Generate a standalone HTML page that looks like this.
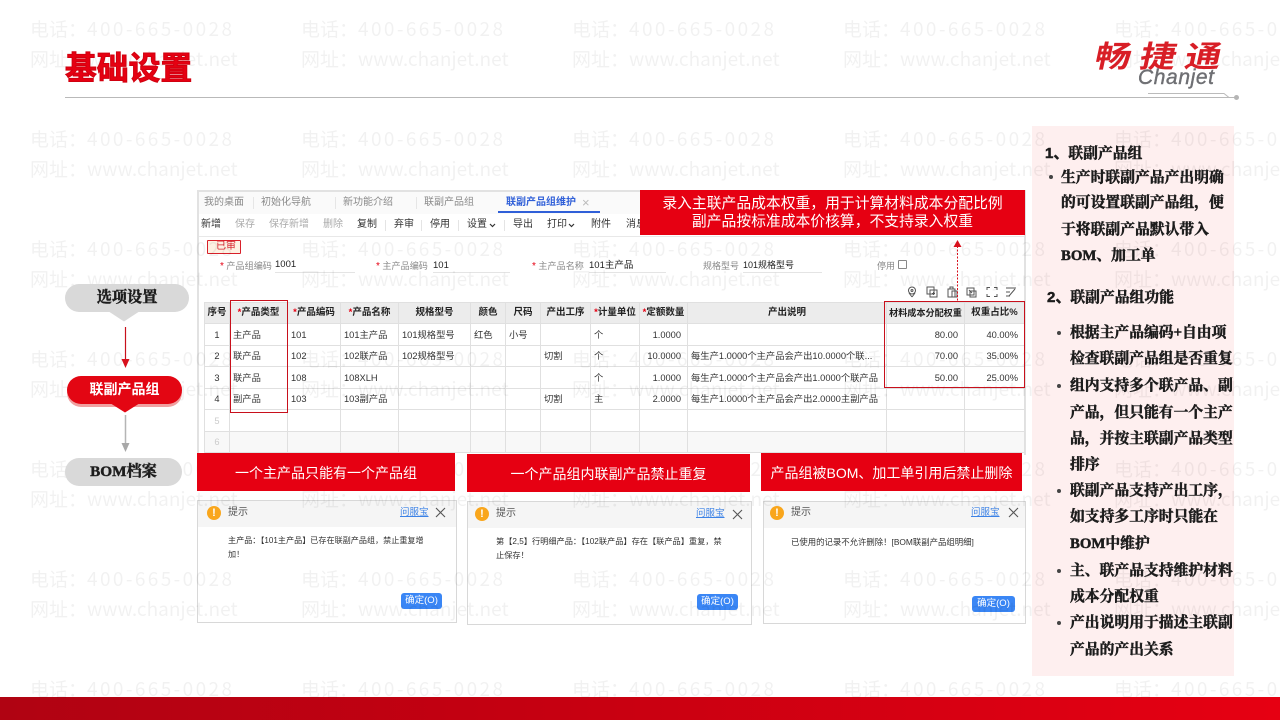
<!DOCTYPE html>
<html lang="zh"><head><meta charset="utf-8"><title>基础设置</title>
<style>
*{box-sizing:border-box}
html,body{margin:0;padding:0;background:#fff}
body{width:1280px;height:720px;position:relative;overflow:hidden;font-family:"Liberation Sans","Noto Sans CJK SC",sans-serif}
.t{position:absolute;white-space:nowrap;line-height:14px;font-size:10px;color:#333}
.b{position:absolute}
#shot{position:absolute;left:0;top:0;width:1280px;height:720px;filter:blur(.35px)}
.wm{position:absolute;left:30px;white-space:nowrap;font-family:"Noto Sans CJK SC",sans-serif;font-size:19px;line-height:24px;color:#000;opacity:.05;z-index:3;font-weight:400}
.wm span{display:inline-block;width:271px}
.wm b{font-weight:400;letter-spacing:2.4px}
.wm.u b{letter-spacing:0}
.tab{color:#8a8a8a}.tool{color:#333}.off{color:#aaa}
.sep{position:absolute;width:1px;height:11px;background:#e4e4e4;top:220px}
.lb{font-size:9.1px;color:#888}
.lb span{color:#e60012;font-size:10px}
table{position:absolute;left:204px;top:302px;border-collapse:collapse;table-layout:fixed;width:820px;font-size:9.3px;color:#333}
td,th{border:1px solid #e0e0e0;padding:0 3px;white-space:nowrap;overflow:hidden;line-height:12px}
th{background:#ececec;font-weight:700;font-size:9.5px;text-align:center;color:#222;padding:0}
th i{color:#e60012;font-style:normal}
.c{text-align:center}td.r{text-align:right;padding-right:6px}
.redbox{position:absolute;border:1px solid #c8101c;z-index:4}
.ban{position:absolute;background:#e60012;color:#fff;font-size:14px;text-align:center;z-index:5;line-height:18px;display:flex;flex-direction:column;justify-content:center}
.dlg{position:absolute;border:1.5px solid #d8d8d8;background:#fff}
.dh{position:absolute;left:0;right:0;top:0;height:26px;background:#f5f5f5}
.ico{position:absolute;width:14px;height:14px;border-radius:50%;background:#f9a61c;color:#fff;font:700 11px/14px "Liberation Sans",sans-serif;text-align:center}
.lnk{position:absolute;color:#3c82e6;text-decoration:underline;font-size:9.5px;line-height:14px;white-space:nowrap}
.btn{position:absolute;background:#3a86f5;color:#fff;border-radius:3px;font-size:9.5px;text-align:center;line-height:16px;white-space:nowrap}
.x{position:absolute;width:11px;height:11px}
.s{position:absolute;white-space:nowrap;font:700 14.8px/18px "Liberation Serif","Noto Serif CJK SC",serif;color:#1c1c1c;-webkit-text-stroke:.5px #1c1c1c;z-index:6}
.s.sans{font-family:"Liberation Sans","Noto Sans CJK SC",sans-serif}
.dot{position:absolute;width:4px;height:4px;background:#444;border-radius:50%;z-index:6}
.pill{position:absolute;background:#d9d9d9;border-radius:14px;z-index:6;text-align:center;font:700 15.2px/27px "Liberation Serif","Noto Serif CJK SC",serif;color:#1d1d1d;-webkit-text-stroke:.45px #1d1d1d}
</style></head><body>

<div class="b" style="left:1032px;top:126px;width:202px;height:550px;background:#feefef"></div>

<div id="shot">
<div class="b" style="left:197px;top:190px;width:829px;height:265px;background:#fff;border:2px solid #e2e2e2;border-bottom:0"></div>
<div class="b" style="left:199px;top:192px;width:825px;height:22px;background:#fafafa"></div>
<div class="b" style="left:199px;top:236px;width:825px;height:1px;background:#e8e8e8"></div>

<div class="t tab" style="left:204px;top:196px">我的桌面</div>
<div class="t tab" style="left:261px;top:196px">初始化导航</div>
<div class="t tab" style="left:343px;top:196px">新功能介绍</div>
<div class="t tab" style="left:424px;top:196px">联副产品组</div>
<div class="t" style="left:506px;top:196px;color:#2f5fd8;font-weight:700">联副产品组维护</div>
<div class="t" style="left:582px;top:196px;color:#bbb;font-size:13px">×</div>
<div class="b" style="left:498px;top:211px;width:102px;height:2px;background:#2f5fd8"></div>
<div class="b" style="left:253px;top:197px;width:1px;height:12px;background:#e6e6e6"></div>
<div class="b" style="left:335px;top:197px;width:1px;height:12px;background:#e6e6e6"></div>
<div class="b" style="left:416px;top:197px;width:1px;height:12px;background:#e6e6e6"></div>

<div class="t tool" style="left:201px;top:218px">新增</div>
<div class="t off" style="left:235px;top:218px">保存</div>
<div class="t off" style="left:269px;top:218px">保存新增</div>
<div class="t off" style="left:323px;top:218px">删除</div>
<div class="t tool" style="left:357px;top:218px">复制</div>
<div class="t tool" style="left:394px;top:218px">弃审</div>
<div class="t tool" style="left:430px;top:218px">停用</div>
<div class="t tool" style="left:467px;top:218px">设置</div>
<svg class="b" style="left:489px;top:223px" width="7" height="5"><path d="M1 1l2.500 2.500L6 1" fill="none" stroke="#333" stroke-width="1.200"/></svg>
<div class="t tool" style="left:513px;top:218px">导出</div>
<div class="t tool" style="left:547px;top:218px">打印</div>
<div class="b" style="left:568px;top:223px"><svg style="display:block" width="7" height="5"><path d="M1 1l2.500 2.500L6 1" fill="none" stroke="#333" stroke-width="1.200"/></svg></div>
<div class="t tool" style="left:591px;top:218px">附件</div>
<div class="t tool" style="left:626px;top:218px">消息</div>
<i class="sep" style="left:385px"></i><i class="sep" style="left:421px"></i><i class="sep" style="left:458px"></i><i class="sep" style="left:504px"></i>

<div class="b" style="left:207px;top:240px;width:34px;height:14px;border:1px solid #d8202a;background:#fdf1e3;border-radius:1px"></div>
<div class="t" style="left:216px;top:240px;color:#d8202a">已审</div>

<div class="t lb" style="left:220px;top:259px"><span>*</span> 产品组编码</div>
<div class="t" style="left:275px;top:258px;color:#222;font-size:9.5px">1001</div>
<div class="b" style="left:275px;top:272px;width:80px;height:1px;background:#e4e4e4"></div>
<div class="t lb" style="left:376px;top:259px"><span>*</span> 主产品编码</div>
<div class="t" style="left:433px;top:259px;color:#222;font-size:9.5px">101</div>
<div class="b" style="left:433px;top:272px;width:77px;height:1px;background:#e4e4e4"></div>
<div class="t lb" style="left:532px;top:259px"><span>*</span> 主产品名称</div>
<div class="t" style="left:589px;top:259px;color:#222;font-size:9.5px">101主产品</div>
<div class="b" style="left:589px;top:272px;width:77px;height:1px;background:#e4e4e4"></div>
<div class="t" style="left:703px;top:259px;color:#888;font-size:9px">规格型号</div>
<div class="t" style="left:743px;top:258px;color:#222;font-size:9px">101规格型号</div>
<div class="b" style="left:743px;top:272px;width:79px;height:1px;background:#e4e4e4"></div>
<div class="t" style="left:877px;top:259px;color:#888;font-size:9px">停用</div>
<div class="b" style="left:898px;top:260px;width:9px;height:9px;border:1px solid #888;border-radius:1px"></div>

<svg class="b" style="left:905px;top:285px" width="112" height="14" fill="none" stroke="#555" stroke-width="1">
<circle cx="7" cy="5.500" r="3.500"/><path d="M7 12L4 8M7 12l3-4"/><circle cx="7" cy="5.500" r="1"/>
<rect x="22" y="2" width="7" height="7"/><rect x="25" y="5" width="7" height="7"/><path d="M28.500 7v3M27 8.500h3"/>
<rect x="43" y="4" width="7" height="8"/><rect x="47" y="6" width="5" height="6"/><path d="M45 4V2h3v2"/>
<rect x="62" y="3" width="7" height="7"/><rect x="65" y="6" width="6" height="6"/><path d="M64 5l3 3"/>
<path d="M82 5V2.500h3M89 2.500h3V5M92 9v2.500h-3M85 11.500h-3V9"/>
<path d="M101 3h10M101 7h4M101 11h4M104 11l6-7"/>
</svg>

<table>
<colgroup><col style="width:25px"><col style="width:58px"><col style="width:53px"><col style="width:58px"><col style="width:72px"><col style="width:35px"><col style="width:35px"><col style="width:50px"><col style="width:49px"><col style="width:48px"><col style="width:199px"><col style="width:78px"><col style="width:60px"></colgroup>
<tr style="height:21px"><th>序号</th><th><i>*</i>产品类型</th><th><i>*</i>产品编码</th><th><i>*</i>产品名称</th><th>规格型号</th><th>颜色</th><th>尺码</th><th>产出工序</th><th><i>*</i>计量单位</th><th><i>*</i>定额数量</th><th>产出说明</th><th style="font-size:9.1px">材料成本分配权重</th><th>权重占比%</th></tr>
<tr style="height:22px"><td class="c">1</td><td>主产品</td><td>101</td><td>101主产品</td><td>101规格型号</td><td>红色</td><td>小号</td><td></td><td>个</td><td class="r">1.0000</td><td></td><td class="r">80.00</td><td class="r">40.00%</td></tr>
<tr style="height:21px"><td class="c">2</td><td>联产品</td><td>102</td><td>102联产品</td><td>102规格型号</td><td></td><td></td><td>切割</td><td>个</td><td class="r">10.0000</td><td>每生产1.0000个主产品会产出10.0000个联...</td><td class="r">70.00</td><td class="r">35.00%</td></tr>
<tr style="height:22px"><td class="c">3</td><td>联产品</td><td>108</td><td>108XLH</td><td></td><td></td><td></td><td></td><td>个</td><td class="r">1.0000</td><td>每生产1.0000个主产品会产出1.0000个联产品</td><td class="r">50.00</td><td class="r">25.00%</td></tr>
<tr style="height:21px"><td class="c">4</td><td>副产品</td><td>103</td><td>103副产品</td><td></td><td></td><td></td><td>切割</td><td>主</td><td class="r">2.0000</td><td>每生产1.0000个主产品会产出2.0000主副产品</td><td></td><td></td></tr>
<tr style="height:22px"><td class="c" style="color:#ccc">5</td><td></td><td></td><td></td><td></td><td></td><td></td><td></td><td></td><td></td><td></td><td></td><td></td></tr>
<tr style="height:21px;background:#f8f8f8"><td class="c" style="color:#ccc">6</td><td></td><td></td><td></td><td></td><td></td><td></td><td></td><td></td><td></td><td></td><td></td><td></td></tr>
</table>

<!-- dialog 1 -->
<div class="dlg" style="left:197px;top:500px;width:260px;height:123px"><div class="dh"></div></div>
<div class="ico" style="left:207px;top:506px">!</div>
<div class="t" style="left:228px;top:506px;color:#555">提示</div>
<div class="lnk" style="left:400px;top:506px">问服宝</div>
<svg class="x" style="left:435px;top:507px"><path d="M1 1l9 9M10 1l-9 9" stroke="#555" stroke-width="1.100" fill="none"/></svg>
<div class="t" style="left:228px;top:534px;font-size:8.1px">主产品：【101主产品】已存在联副产品组，禁止重复增</div>
<div class="t" style="left:228px;top:548px;font-size:8.1px">加！</div>
<div class="btn" style="left:401px;top:593px;width:41px">确定(O)</div>
<!-- dialog 2 -->
<div class="dlg" style="left:467px;top:501px;width:285px;height:124px"><div class="dh"></div></div>
<div class="ico" style="left:475px;top:507px">!</div>
<div class="t" style="left:496px;top:507px;color:#555">提示</div>
<div class="lnk" style="left:696px;top:507px">问服宝</div>
<svg class="x" style="left:732px;top:509px"><path d="M1 1l9 9M10 1l-9 9" stroke="#555" stroke-width="1.100" fill="none"/></svg>
<div class="t" style="left:496px;top:535px;font-size:8.2px">第【2,5】行明细产品：【102联产品】存在【联产品】重复，禁</div>
<div class="t" style="left:496px;top:549px;font-size:8.2px">止保存！</div>
<div class="btn" style="left:697px;top:594px;width:41px">确定(O)</div>
<!-- dialog 3 -->
<div class="dlg" style="left:763px;top:501px;width:263px;height:123px"><div class="dh"></div></div>
<div class="ico" style="left:770px;top:506px">!</div>
<div class="t" style="left:791px;top:506px;color:#555">提示</div>
<div class="lnk" style="left:971px;top:506px">问服宝</div>
<svg class="x" style="left:1008px;top:507px"><path d="M1 1l9 9M10 1l-9 9" stroke="#555" stroke-width="1.100" fill="none"/></svg>
<div class="t" style="left:791px;top:535px;font-size:8.4px">已使用的记录不允许删除！[BOM联副产品组明细]</div>
<div class="btn" style="left:972px;top:596px;width:43px">确定(O)</div>
</div>

<!-- watermark -->
<div class="wm" style="top:17px"><span>电话：<b>400-665-0028</b></span><span>电话：<b>400-665-0028</b></span><span>电话：<b>400-665-0028</b></span><span>电话：<b>400-665-0028</b></span><span>电话：<b>400-665-0028</b></span></div>
<div class="wm u" style="top:47px"><span>网址：<b>www.chanjet.net</b></span><span>网址：<b>www.chanjet.net</b></span><span>网址：<b>www.chanjet.net</b></span><span>网址：<b>www.chanjet.net</b></span><span>网址：<b>www.chanjet.net</b></span></div>
<div class="wm" style="top:127px"><span>电话：<b>400-665-0028</b></span><span>电话：<b>400-665-0028</b></span><span>电话：<b>400-665-0028</b></span><span>电话：<b>400-665-0028</b></span><span>电话：<b>400-665-0028</b></span></div>
<div class="wm u" style="top:157px"><span>网址：<b>www.chanjet.net</b></span><span>网址：<b>www.chanjet.net</b></span><span>网址：<b>www.chanjet.net</b></span><span>网址：<b>www.chanjet.net</b></span><span>网址：<b>www.chanjet.net</b></span></div>
<div class="wm" style="top:237px"><span>电话：<b>400-665-0028</b></span><span>电话：<b>400-665-0028</b></span><span>电话：<b>400-665-0028</b></span><span>电话：<b>400-665-0028</b></span><span>电话：<b>400-665-0028</b></span></div>
<div class="wm u" style="top:267px"><span>网址：<b>www.chanjet.net</b></span><span>网址：<b>www.chanjet.net</b></span><span>网址：<b>www.chanjet.net</b></span><span>网址：<b>www.chanjet.net</b></span><span>网址：<b>www.chanjet.net</b></span></div>
<div class="wm" style="top:347px"><span>电话：<b>400-665-0028</b></span><span>电话：<b>400-665-0028</b></span><span>电话：<b>400-665-0028</b></span><span>电话：<b>400-665-0028</b></span><span>电话：<b>400-665-0028</b></span></div>
<div class="wm u" style="top:377px"><span>网址：<b>www.chanjet.net</b></span><span>网址：<b>www.chanjet.net</b></span><span>网址：<b>www.chanjet.net</b></span><span>网址：<b>www.chanjet.net</b></span><span>网址：<b>www.chanjet.net</b></span></div>
<div class="wm" style="top:457px"><span>电话：<b>400-665-0028</b></span><span>电话：<b>400-665-0028</b></span><span>电话：<b>400-665-0028</b></span><span>电话：<b>400-665-0028</b></span><span>电话：<b>400-665-0028</b></span></div>
<div class="wm u" style="top:487px"><span>网址：<b>www.chanjet.net</b></span><span>网址：<b>www.chanjet.net</b></span><span>网址：<b>www.chanjet.net</b></span><span>网址：<b>www.chanjet.net</b></span><span>网址：<b>www.chanjet.net</b></span></div>
<div class="wm" style="top:567px"><span>电话：<b>400-665-0028</b></span><span>电话：<b>400-665-0028</b></span><span>电话：<b>400-665-0028</b></span><span>电话：<b>400-665-0028</b></span><span>电话：<b>400-665-0028</b></span></div>
<div class="wm u" style="top:597px"><span>网址：<b>www.chanjet.net</b></span><span>网址：<b>www.chanjet.net</b></span><span>网址：<b>www.chanjet.net</b></span><span>网址：<b>www.chanjet.net</b></span><span>网址：<b>www.chanjet.net</b></span></div>
<div class="wm" style="top:677px"><span>电话：<b>400-665-0028</b></span><span>电话：<b>400-665-0028</b></span><span>电话：<b>400-665-0028</b></span><span>电话：<b>400-665-0028</b></span><span>电话：<b>400-665-0028</b></span></div>

<!-- header -->
<div class="b" style="left:65px;top:47px;z-index:6;white-space:nowrap;font:700 31.8px/38px 'Noto Sans CJK SC',sans-serif;color:#e60012;-webkit-text-stroke:1px #d0000f">基础设置</div>
<div class="b" style="left:65px;top:97px;width:1171px;height:1px;background:#b9b9b9;z-index:6"></div>
<svg class="b" style="left:1140px;top:88px;z-index:6" width="102" height="14"><path d="M8 5.500H84L89 9.500" fill="none" stroke="#bbb" stroke-width="1"/><circle cx="96.500" cy="9.500" r="2.500" fill="#b5b5b5"/></svg>
<div class="b" style="left:1096px;top:36px;z-index:6;white-space:nowrap;font:700 30px/36px 'Noto Sans CJK SC',sans-serif;letter-spacing:7.500px;color:#d81e26;transform-origin:0 50%;transform:scale(1.2,1) skewX(-10deg)">畅捷通</div>
<div class="b" style="left:1138px;top:67px;z-index:6;white-space:nowrap;font:italic 400 21px/22px 'Liberation Sans',sans-serif;color:#6e6f73;-webkit-text-stroke:.4px #6e6f73;letter-spacing:.6px">Chanjet</div>

<!-- red outline boxes -->
<div class="redbox" style="left:230px;top:300px;width:58px;height:113px"></div>
<div class="redbox" style="left:884px;top:301px;width:141px;height:87px"></div>

<!-- dashed arrow -->
<svg class="b" style="left:950px;top:238px;z-index:6" width="16" height="64"><path d="M7.500 8V63" stroke="#d8101c" stroke-width="1" stroke-dasharray="2 1.500" fill="none"/><path d="M7.500 2l4 7h-8z" fill="#d8101c"/></svg>

<!-- banners -->
<div class="ban" style="left:640px;top:190px;width:385px;height:45px;font-size:14.8px"><div>录入主联产品成本权重，用于计算材料成本分配比例</div><div>副产品按标准成本价核算，不支持录入权重</div></div>
<div class="ban" style="left:197px;top:453px;width:258px;height:38px;padding-top:1px">一个主产品只能有一个产品组</div>
<div class="ban" style="left:467px;top:454px;width:283px;height:38px;padding-top:1px">一个产品组内联副产品禁止重复</div>
<div class="ban" style="left:761px;top:453px;width:261px;height:38px;padding-top:1px">产品组被BOM、加工单引用后禁止删除</div>

<!-- left flow -->
<div class="pill" style="left:65px;top:284px;width:124px;height:28px">选项设置</div>
<svg class="b" style="left:108px;top:311px;z-index:6" width="32" height="11"><path d="M0 0h32L16 10.500z" fill="#d9d9d9"/></svg>
<svg class="b" style="left:118px;top:326px;z-index:6" width="16" height="44"><path d="M7.500 1V34" stroke="#c8101c" stroke-width="1.200"/><path d="M3.500 33h8l-4 9z" fill="#d8101c"/></svg>
<div class="b" style="left:67px;top:379px;width:115px;height:28px;background:#f0a0a0;border-radius:14px;z-index:6"></div>
<div class="b" style="left:67px;top:376px;width:115px;height:28px;background:#e30613;border-radius:14px;z-index:6;color:#fff;text-align:center;font:700 14px/26px 'Noto Sans CJK SC',sans-serif">联副产品组</div>
<svg class="b" style="left:110px;top:403px;z-index:6" width="30" height="10"><path d="M0 0h30L15 9.500z" fill="#e30613"/></svg>
<svg class="b" style="left:118px;top:414px;z-index:6" width="16" height="40"><path d="M7.500 1V30" stroke="#b5b5b5" stroke-width="1.500"/><path d="M3.500 29h8l-4 9z" fill="#a8a8a8"/></svg>
<div class="pill" style="left:65px;top:458px;width:117px;height:28px">BOM档案</div>

<!-- right panel text -->
<div class="s sans" style="left:1045px;top:144px"><span style="font-size:15px">1、</span><span style="font-family:'Noto Serif CJK SC',serif">联副产品组</span></div>
<i class="dot" style="left:1049px;top:175px"></i>
<div class="s" style="left:1061px;top:169px">生产时联副产品产出明确</div>
<div class="s" style="left:1061px;top:194px">的可设置联副产品组，便</div>
<div class="s" style="left:1061px;top:221px">于将联副产品默认带入</div>
<div class="s" style="left:1061px;top:247px">BOM、加工单</div>
<div class="s sans" style="left:1047px;top:288px"><span style="font-size:15px">2、</span><span style="font-family:'Noto Serif CJK SC',serif">联副产品组功能</span></div>
<i class="dot" style="left:1057px;top:331px"></i>
<div class="s" style="left:1070px;top:324px">根据主产品编码+自由项</div>
<div class="s" style="left:1070px;top:350px">检查联副产品组是否重复</div>
<i class="dot" style="left:1057px;top:384px"></i>
<div class="s" style="left:1070px;top:377px">组内支持多个联产品、副</div>
<div class="s" style="left:1070px;top:404px">产品，但只能有一个主产</div>
<div class="s" style="left:1070px;top:430px">品，并按主联副产品类型</div>
<div class="s" style="left:1070px;top:456px">排序</div>
<i class="dot" style="left:1057px;top:489px"></i>
<div class="s" style="left:1070px;top:482px">联副产品支持产出工序，</div>
<div class="s" style="left:1070px;top:508px">如支持多工序时只能在</div>
<div class="s" style="left:1070px;top:535px">BOM中维护</div>
<i class="dot" style="left:1057px;top:569px"></i>
<div class="s" style="left:1070px;top:562px">主、联产品支持维护材料</div>
<div class="s" style="left:1070px;top:588px">成本分配权重</div>
<i class="dot" style="left:1057px;top:621px"></i>
<div class="s" style="left:1070px;top:614px">产出说明用于描述主联副</div>
<div class="s" style="left:1070px;top:641px">产品的产出关系</div>

<!-- footer -->
<div class="b" style="left:0;top:697px;width:1280px;height:23px;background:linear-gradient(90deg,#b00312 0%,#c40011 40%,#e60012 100%);z-index:2"></div>
</body></html>
